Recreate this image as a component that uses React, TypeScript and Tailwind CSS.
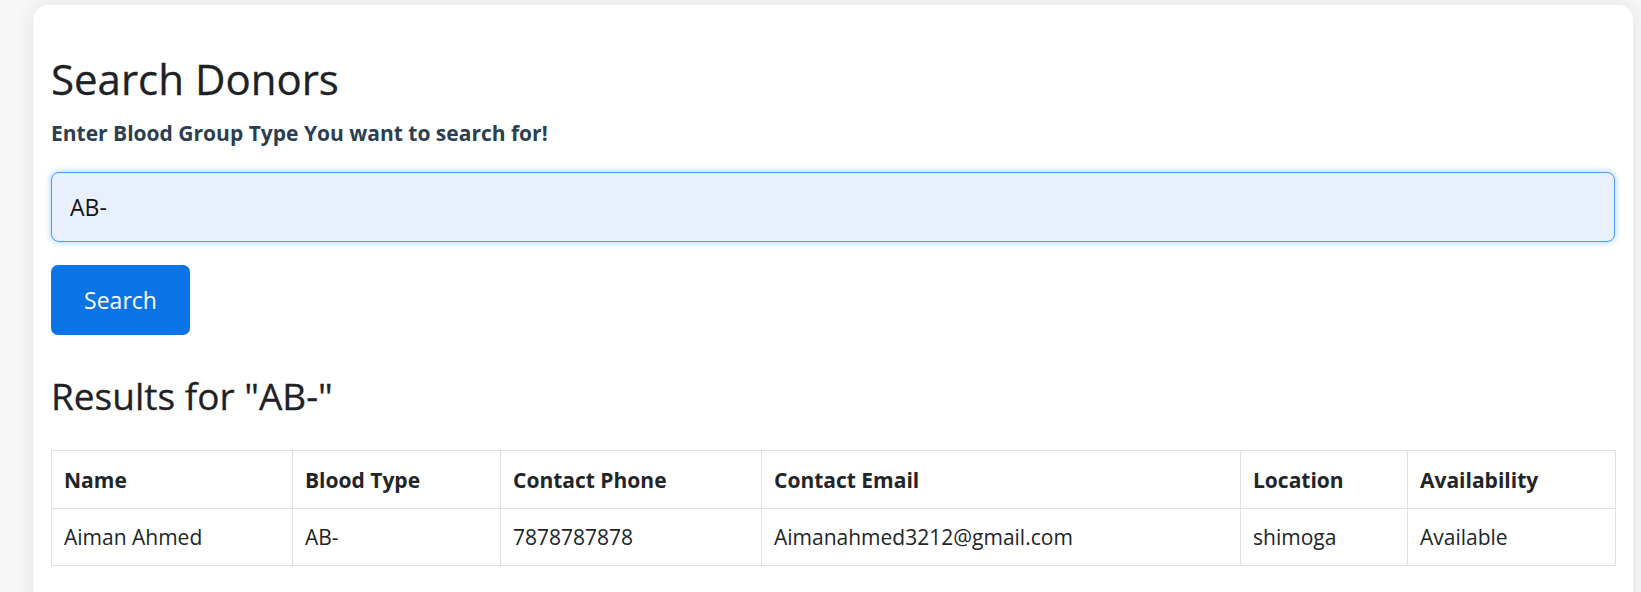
import React, { useState } from "react";

type Donor = {
  name: string;
  bloodType: string;
  phone: string;
  email: string;
  location: string;
  availability: string;
};

const donors: Donor[] = [
  {
    name: "Aiman Ahmed",
    bloodType: "AB-",
    phone: "7878787878",
    email: "Aimanahmed3212@gmail.com",
    location: "shimoga",
    availability: "Available",
  },
];

const columns = [
  { label: "Name", width: "w-[241px]" },
  { label: "Blood Type", width: "w-[208px]" },
  { label: "Contact Phone", width: "w-[261px]" },
  { label: "Contact Email", width: "w-[479px]" },
  { label: "Location", width: "w-[167px]" },
  { label: "Availability", width: "w-[208px]" },
];

const App = () => {
  const [query, setQuery] = useState("AB-");

  return (
    <div className="min-h-[592px] bg-[#f7f7f7] pt-[5px] pl-[33px] font-['Open_Sans',sans-serif] overflow-hidden">
      <div className="w-[1600px] min-h-[620px] bg-white rounded-[15px] shadow-[0_0_22px_rgba(0,0,0,0.09)] px-[18px] pt-[46px]">
        <h1 className="text-[42px] leading-[56px] text-[#1e2226] font-normal [-webkit-text-stroke:0.3px_#1e2226]">
          Search Donors
        </h1>
        <p className="mt-[15px] text-[21px] leading-[23px] font-bold text-[#2c3e50]">
          Enter Blood Group Type You want to search for!
        </p>

        <input
          value={query}
          onChange={(e) => setQuery(e.target.value)}
          className="mt-[27px] block w-full h-[70px] px-[18px] text-[23px] text-[#111] bg-[#e8f0fe] border border-[#4d9bf0] rounded-[8px] shadow-[0_0_5px_2px_rgba(0,123,255,0.22)] outline-none"
        />

        <button className="mt-[23px] block w-[139px] h-[70px] bg-[#0a74e6] text-white text-[23px] rounded-[7px]">
          Search
        </button>

        <h2 className="mt-[36px] text-[37px] leading-[50px] text-[#1e2226] font-normal [-webkit-text-stroke:0.3px_#1e2226]">
          Results for "AB-"
        </h2>

        {/* Results */}
        <table className="mt-[29px] w-[1564px] border-collapse table-fixed text-[21px] leading-[30px] text-[#212529]">
          <thead>
            <tr>
              {columns.map((c) => (
                <th
                  key={c.label}
                  className={`${c.width} border border-[#dee2e6] px-[12px] pt-[14px] pb-[13px] text-left font-bold`}
                >
                  {c.label}
                </th>
              ))}
            </tr>
          </thead>
          <tbody>
            {donors.map((d) => (
              <tr key={d.email}>
                <td className="border border-[#dee2e6] px-[12px] py-[13px]">{d.name}</td>
                <td className="border border-[#dee2e6] px-[12px] py-[13px]">{d.bloodType}</td>
                <td className="border border-[#dee2e6] px-[12px] py-[13px]">{d.phone}</td>
                <td className="border border-[#dee2e6] px-[12px] py-[13px]">{d.email}</td>
                <td className="border border-[#dee2e6] px-[12px] py-[13px]">{d.location}</td>
                <td className="border border-[#dee2e6] px-[12px] py-[13px]">{d.availability}</td>
              </tr>
            ))}
          </tbody>
        </table>
      </div>
    </div>
  );
};

export default App;
